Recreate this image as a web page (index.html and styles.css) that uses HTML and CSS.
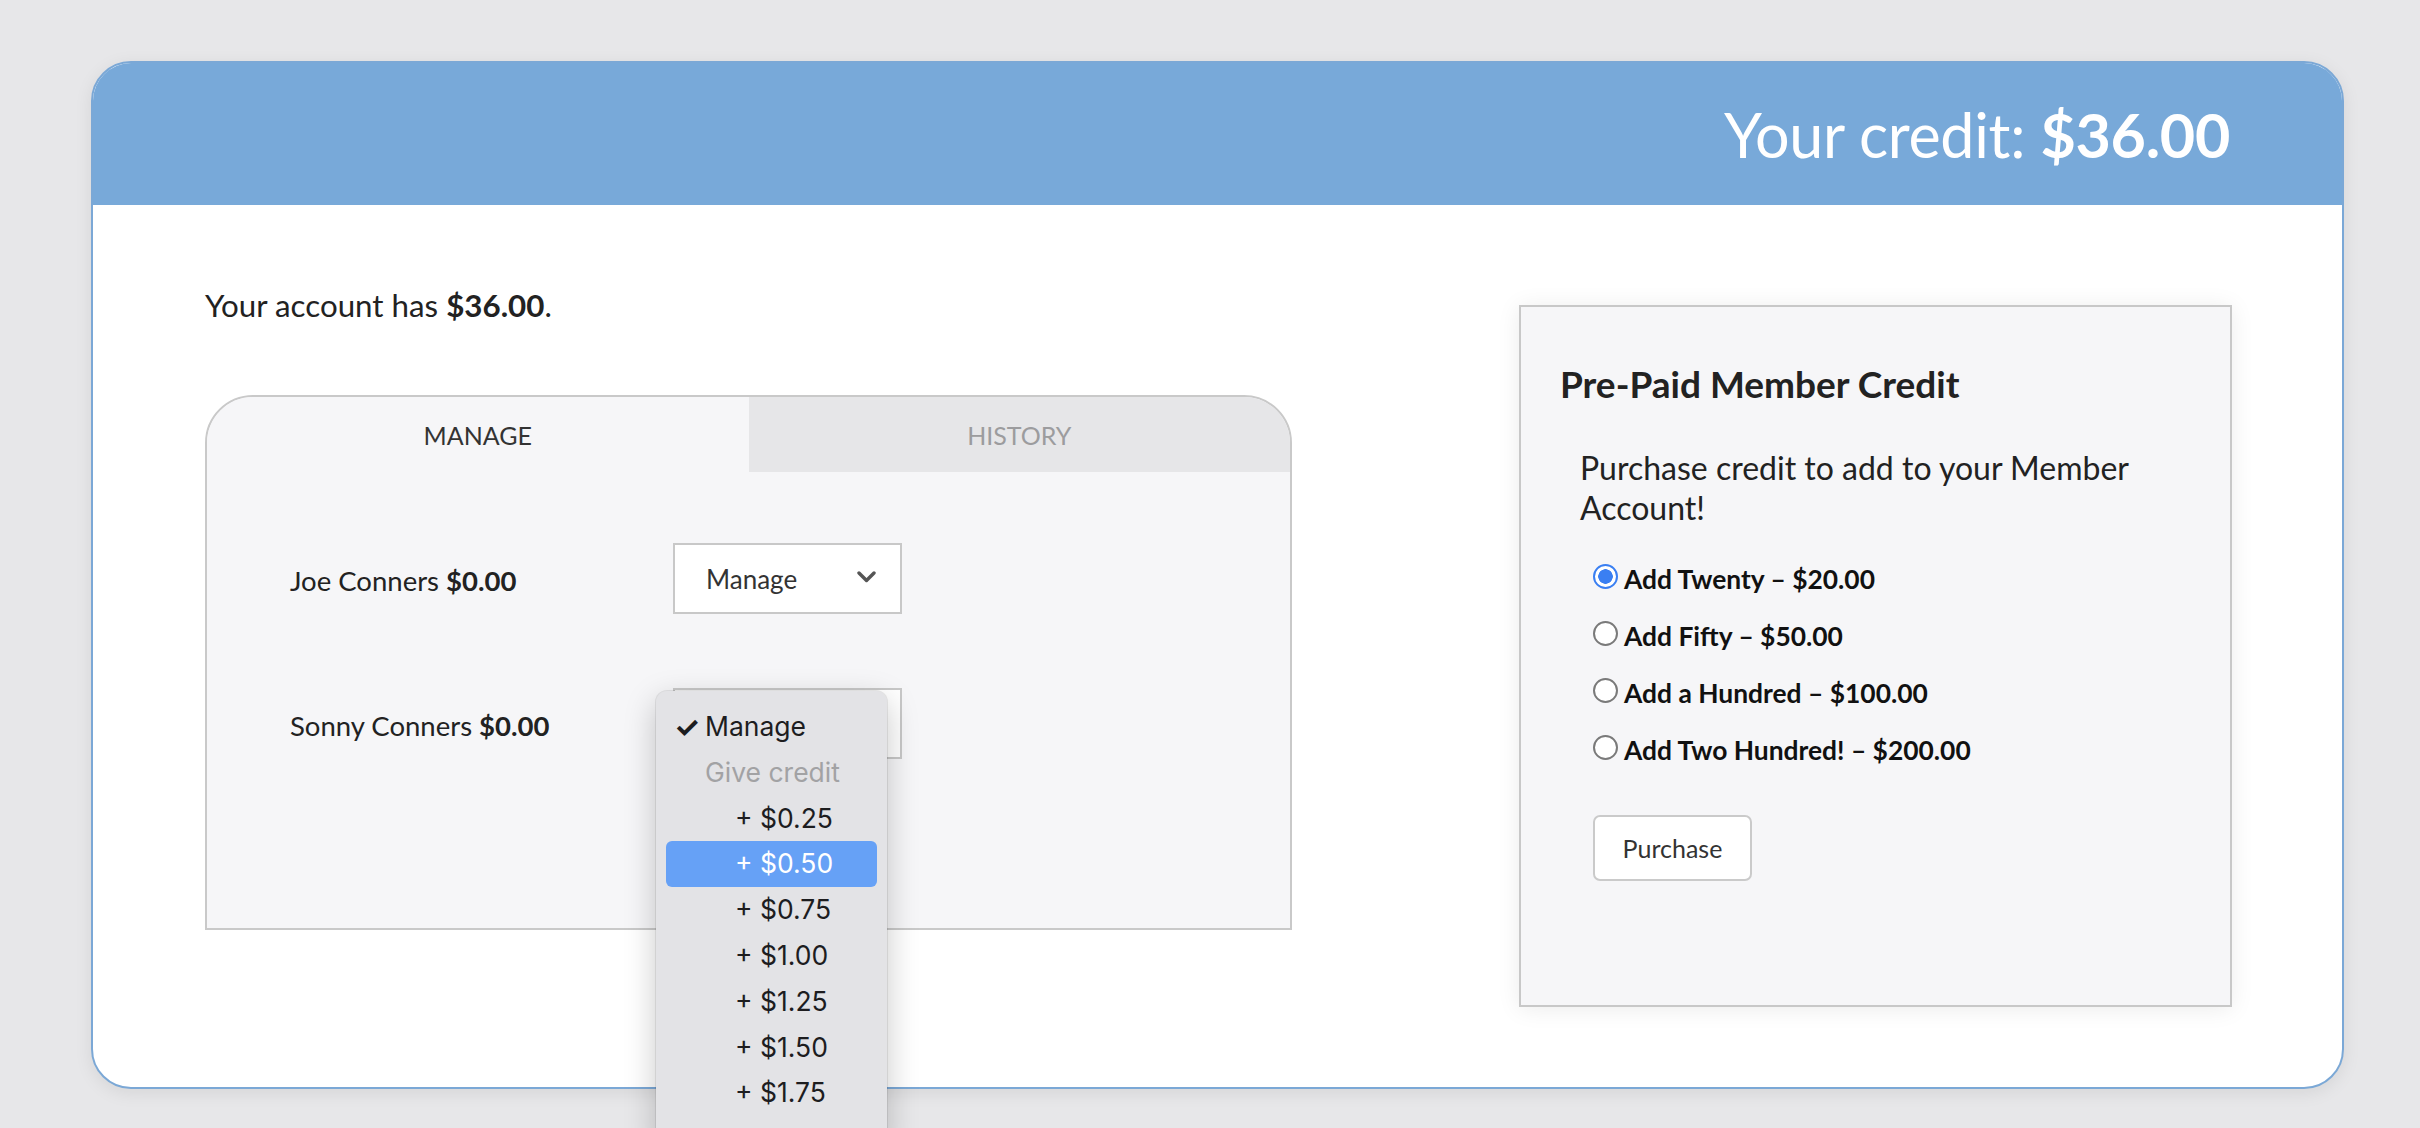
FILE: index.html
```html
<!DOCTYPE html>
<html lang="en">
<head>
<meta charset="utf-8">
<title>Member Credit</title>
<link rel="stylesheet" href="styles.css">
</head>
<body>
<div class="card">
  <header class="card-head">
    <h1 class="credit">Your credit: <b>$36.00</b></h1>
  </header>
  <div class="card-body">
    <section class="left">
      <p class="account">Your account has <b>$36.00</b>.</p>
      <div class="tabs">
        <div class="tab-bar">
          <div class="tab active">MANAGE</div>
          <div class="tab">HISTORY</div>
        </div>
        <div class="tab-panel">
          <div class="row">
            <span class="name">Joe Conners <b>$0.00</b></span>
            <div class="select">
              <span>Manage</span>
              <svg class="chev" width="19" height="12" viewBox="0 0 19 12"><path d="M2 2 L9.5 9.5 L17 2" fill="none" stroke="#555" stroke-width="3.4" stroke-linecap="round" stroke-linejoin="round"/></svg>
            </div>
          </div>
          <div class="row">
            <span class="name">Sonny Conners <b>$0.00</b></span>
            <div class="select open">
              <span>Manage</span>
              <svg class="chev" width="19" height="12" viewBox="0 0 19 12"><path d="M2 2 L9.5 9.5 L17 2" fill="none" stroke="#555" stroke-width="3.4" stroke-linecap="round" stroke-linejoin="round"/></svg>
              <ul class="menu">
                <li class="item checked"><span class="check">✓</span>Manage</li>
                <li class="item group">Give credit</li>
                <li class="item sub">+ $0.25</li>
                <li class="item sub hl">+ $0.50</li>
                <li class="item sub">+ $0.75</li>
                <li class="item sub">+ $1.00</li>
                <li class="item sub">+ $1.25</li>
                <li class="item sub">+ $1.50</li>
                <li class="item sub">+ $1.75</li>
              </ul>
            </div>
          </div>
        </div>
      </div>
    </section>
    <aside class="panel">
      <h2 class="panel-title">Pre-Paid Member Credit</h2>
      <p class="panel-desc">Purchase credit to add to your Member Account!</p>
      <form class="options">
        <label class="opt"><input type="radio" name="amt" checked><span>Add Twenty – $20.00</span></label>
        <label class="opt"><input type="radio" name="amt"><span>Add Fifty – $50.00</span></label>
        <label class="opt"><input type="radio" name="amt"><span>Add a Hundred – $100.00</span></label>
        <label class="opt"><input type="radio" name="amt"><span>Add Two Hundred! – $200.00</span></label>
        <button type="button" class="btn">Purchase</button>
      </form>
    </aside>
  </div>
</div>
</body>
</html>
```
FILE: styles.css
```css
html, body {
  margin: 0;
  height: 1128px;
  overflow: hidden;
}
body {
  background: #e7e7e9;
  font-family: Lato, "Liberation Sans", sans-serif;
  color: #222;
  padding: 61px 0 0 91px;
  box-sizing: border-box;
}
.card {
  width: 2253px;
  box-sizing: border-box;
  background: #fff;
  border: 2px solid #7ba8d6;
  border-radius: 40px;
  box-shadow: 0 4px 18px rgba(0, 0, 0, 0.08);
}
.card-head {
  height: 142px;
  background: #78a9d9;
  border-radius: 38px 38px 0 0;
  display: flex;
  align-items: center;
  justify-content: flex-end;
  padding-right: 112px;
}
.credit {
  margin: 0;
  color: #fff;
  font-weight: 400;
  font-size: 61px;
  line-height: 1;
  letter-spacing: -0.3px;
}
.credit b { font-weight: 700; }
.card-body {
  display: grid;
  grid-template-columns: 1087px 713px;
  justify-content: space-between;
  align-items: start;
  padding: 80px 110px 80px 112px;
}
.account {
  margin: 0;
  font-size: 31.3px;
  line-height: 40px;
  color: #222;
}
.account b { font-weight: 700; }
.tabs {
  margin-top: 70px;
  border: 2px solid #c9c9c9;
  border-radius: 48px 48px 0 0;
  background: #f6f6f8;
}
.tab-bar {
  display: grid;
  grid-template-columns: 1fr 1fr;
  height: 75px;
  border-radius: 46px 46px 0 0;
  overflow: hidden;
}
.tab {
  display: flex;
  align-items: center;
  justify-content: center;
  font-size: 25px;
  color: #9c9c9e;
  background: #e6e6e8;
}
.tab.active {
  background: #f6f6f8;
  color: #333;
}
.tab-panel {
  padding: 71px 0 169px 83px;
  display: flex;
  flex-direction: column;
  gap: 74px;
}
.row {
  display: flex;
  align-items: center;
}
.name {
  width: 383px;
  font-size: 27.5px;
  color: #222;
  padding-top: 3px;
}
.name b { font-weight: 700; }
.select {
  position: relative;
  width: 229px;
  height: 71px;
  box-sizing: border-box;
  border: 2px solid #c8c8c8;
  background: #fff;
  display: flex;
  align-items: center;
  justify-content: space-between;
  padding: 0 24px 0 31px;
  font-size: 26px;
  color: #333;
}
.chev { margin-top: -4px; }
.menu {
  position: absolute;
  left: -19px;
  top: 1px;
  width: 231px;
  box-sizing: border-box;
  margin: 0;
  padding: 13px 10px 30px;
  list-style: none;
  background: #e3e3e6;
  border-radius: 11px;
  box-shadow: 0 0 0 1px rgba(0, 0, 0, 0.08), 0 10px 32px rgba(0, 0, 0, 0.22);
  font-family: Inter, "Liberation Sans", sans-serif;
  font-size: 26.5px;
  color: #1d1d1f;
  z-index: 5;
}
.item {
  position: relative;
  height: 45.8px;
  line-height: 45.8px;
  padding-left: 39px;
  border-radius: 6px;
  white-space: nowrap;
}
.item.group { color: #a2a2a4; }
.item.sub { padding-left: 69px; }
.item.hl {
  background: #66a1f6;
  color: #fff;
}
.check {
  position: absolute;
  left: 8px;
  font-size: 29px;
  font-weight: 700;
}
.panel {
  margin-top: 20px;
  min-height: 702px;
  box-sizing: border-box;
  border: 2px solid #c8c8c8;
  background: #f6f6f8;
  box-shadow: 0 2px 22px rgba(0, 0, 0, 0.08);
  padding: 55px 30px 40px 39px;
}
.panel-title {
  margin: 0;
  font-size: 37px;
  line-height: 44px;
  font-weight: 700;
  color: #222;
}
.panel-desc {
  margin: 42px 0 0 20px;
  width: 600px;
  font-size: 32px;
  line-height: 40px;
  color: #222;
}
.options {
  margin: 22px 0 0 33px;
  display: flex;
  flex-direction: column;
  align-items: flex-start;
}
.opt {
  display: flex;
  align-items: center;
  height: 57px;
  font-size: 26.4px;
  font-weight: 700;
  color: #111;
}
.opt input {
  appearance: none;
  -webkit-appearance: none;
  width: 25px;
  height: 25px;
  margin: -4px 6px 0 0;
  box-sizing: border-box;
  border: 2px solid #7a7a7a;
  border-radius: 50%;
  background: #fff;
}
.opt input:checked {
  border: 2px solid #3a7ff2;
  background: radial-gradient(circle, #3a7ff2 0 7px, #fff 7.5px);
}
.btn {
  margin-top: 37px;
  width: 159px;
  height: 66px;
  background: #fff;
  border: 2px solid #cacaca;
  border-radius: 7px;
  font-family: Lato, "Liberation Sans", sans-serif;
  font-size: 25px;
  color: #333;
}
```
